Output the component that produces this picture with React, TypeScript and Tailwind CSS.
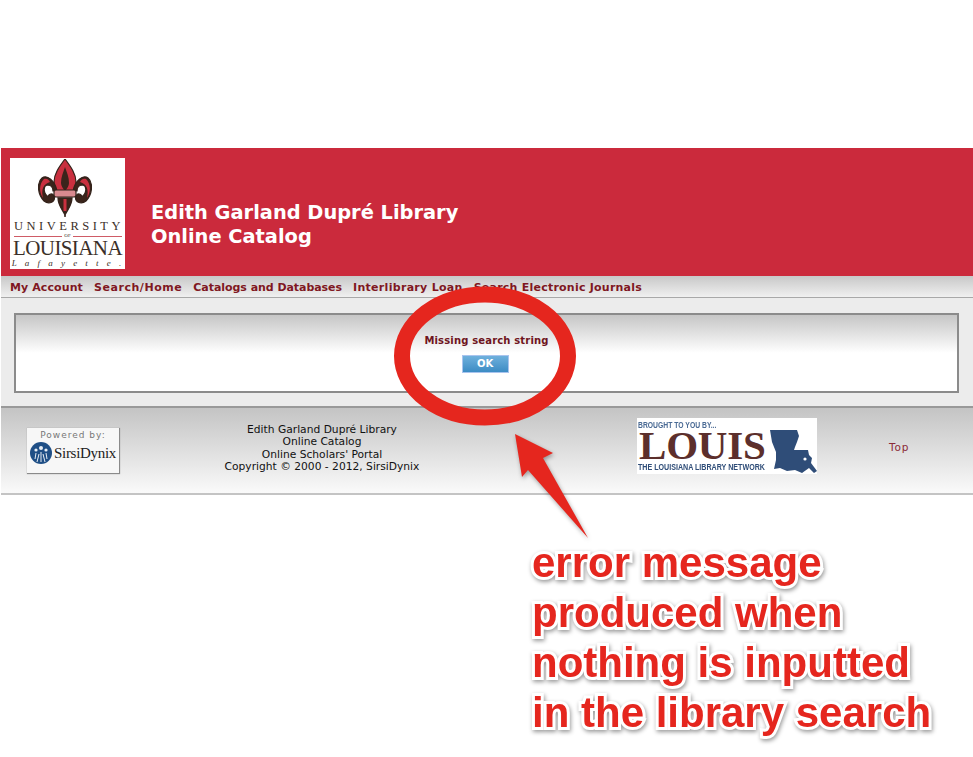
const navLinks = [
  { label: "My Account", cls: "tracking-[0.1px]" },
  { label: "Search/Home", cls: "tracking-[0.55px]" },
  { label: "Catalogs and Databases", cls: "tracking-[-0.05px]" },
  { label: "Interlibrary Loan", cls: "tracking-[0.3px]" },
  { label: "Search Electronic Journals", cls: "tracking-[0.23px]" },
];

function FleurDeLis() {
  return (
    <svg viewBox="0 0 54 58" className="w-[54px] h-[58px]">
      <g stroke="#33221a" strokeWidth="1.2" fill="#c9303f">
        <path d="M27 0C33 8 38 15 38 23C38 29 34 31 34 38L20 38C20 31 16 29 16 23C16 15 21 8 27 0Z" />
        <path d="M27 8C25 14 23 18 23 24C23 27 25 29 26 31L28 31C29 29 31 27 31 24C31 18 29 14 27 8Z" fill="#3a241b" stroke="none" />
        <path d="M20 39L34 39C34 46 30 50 27 56C24 50 20 46 20 39Z" fill="#3a241b" />
        <path d="M27 40L27 52" stroke="#c9303f" strokeWidth="3" />
        <path d="M19 32C17 22 9 15 4 19C-1 23 -1 35 6 42C11 46 18 43 16 37C14 33 9 36 11 38C5 35 5 27 9 26C13 26 15 29 15 32Z" fill="#3a241b" />
        <path d="M35 32C37 22 45 15 50 19C55 23 55 35 48 42C43 46 36 43 38 37C40 33 45 36 43 38C49 35 49 27 45 26C41 26 39 29 39 32Z" fill="#3a241b" />
        <path d="M6 20C1 25 1 33 5 39C3 31 5 25 12 23C11 21 9 19 6 20Z" stroke="none" />
        <path d="M48 20C53 25 53 33 49 39C51 31 49 25 42 23C43 21 45 19 48 20Z" stroke="none" />
        <rect x="16" y="31" width="22" height="7" rx="2" fill="#d98a8f" />
      </g>
      <circle cx="27" cy="57" r="1" fill="#33221a" />
    </svg>
  );
}

function UniversityLogo() {
  return (
    <div className="w-[115px] h-[111px] bg-white flex flex-col items-center font-['Liberation_Serif',serif] text-[#3b2f28] shrink-0">
      <div className="h-[60px] pt-px flex justify-center -translate-x-[3px]">
        <FleurDeLis />
      </div>
      <div className="text-[12.5px] leading-[14px] tracking-[3.5px] ml-[3px] mt-px whitespace-nowrap">UNIVERSITY</div>
      <div className="w-[108px] flex items-center gap-[2px] h-[6px]">
        <div className="flex-1 h-px bg-[#cf5b66]" />
        <div className="text-[5px] leading-[6px]">OF</div>
        <div className="flex-1 h-px bg-[#cf5b66]" />
      </div>
      <div className="text-[21px] leading-[19px] tracking-[-0.6px] whitespace-nowrap">LOUISIANA</div>
      <div className="text-[9px] leading-[11px] italic tracking-[8.2px] ml-[6px] whitespace-nowrap">Lafayette.</div>
    </div>
  );
}

function SirsiLogo() {
  return (
    <div className="w-[93px] h-[46px] bg-[#f7f7f7] border-b border-r border-[#8a8a8a] flex flex-col items-center shrink-0 shadow-[0_0_1px_#999]">
      <div className="text-[9px] leading-[10px] tracking-[1px] mt-[2px] text-[#777] font-['DejaVu_Sans',sans-serif]">Powered by:</div>
      <div className="flex items-center gap-[2px] mt-[2px]">
        <svg viewBox="0 0 22 22" className="w-[22px] h-[22px]">
          <circle cx="11" cy="11" r="11" fill="#1f4f86" />
          <circle cx="11" cy="6" r="2" fill="#e8eef5" />
          <circle cx="6" cy="8" r="1.6" fill="#e8eef5" />
          <circle cx="16" cy="8" r="1.6" fill="#e8eef5" />
          <path d="M11 10V20M9 12L7 20M13 12L15 20M6 11L5 17M16 11L17 17" stroke="#e8eef5" strokeWidth="1" />
        </svg>
        <span className="font-['Liberation_Serif',serif] text-[15px] leading-[22px] tracking-[-0.3px] text-[#222]">SirsiDynix</span>
      </div>
    </div>
  );
}

function LouisLogo() {
  return (
    <div className="w-[180px] h-[56px] bg-white flex shrink-0">
      <div className="w-[133px] flex flex-col pl-px">
        <div className="text-[8.5px] leading-[10px] mt-[2px] font-bold text-[#4a6a94] font-['Liberation_Sans',sans-serif] scale-x-[0.8] origin-left whitespace-nowrap">BROUGHT TO YOU BY...</div>
        <div className="text-[41px] leading-[31px] font-bold tracking-[-0.2px] text-[#5c2f2c] font-['Liberation_Serif',serif] whitespace-nowrap h-[32px] pl-px">LOUIS</div>
        <div className="text-[9px] leading-[10px] font-bold text-[#2f4d78] font-['Liberation_Sans',sans-serif] scale-x-[0.79] origin-left whitespace-nowrap">THE LOUISIANA LIBRARY NETWORK</div>
      </div>
      <svg viewBox="0 0 47 43" className="w-[47px] h-[43px] mt-[12px]">
        <path d="M0 0L27 0L29 6L27 12L25 17L24 20L38 20L39 25L42 28L41 33L47 41L44 43L39 38L32 43L25 40L17 41L10 38L4 39L6 30L6 22L2 12Z" fill="#2f4d78" />
        <circle cx="35" cy="29" r="1.6" fill="#fff" />
      </svg>
    </div>
  );
}

export default function App() {
  return (
    <div className="relative w-[973px] h-[757px] bg-white overflow-hidden pt-[148px] pl-px font-['DejaVu_Sans',sans-serif]">
      {/* header */}
      <div className="h-[128px] bg-[#cb2a3c] flex items-start pl-[9px] pt-[10px]">
        <UniversityLogo />
        <div className="ml-[26px] mt-[43px] text-white font-bold text-[19.4px] leading-[23.5px]">
          <div>Edith Garland Dupré Library</div>
          <div>Online Catalog</div>
        </div>
      </div>

      {/* nav */}
      <div className="h-[22px] pt-[4px] bg-gradient-to-b from-[#c8c8c8] to-[#f0f0f0] border-b border-[#a8a8a8] flex items-center gap-[11px] pl-[9px] text-[11px] font-bold text-[#7f1722] whitespace-nowrap">
        {navLinks.map((l) => (
          <span key={l.label} className={l.cls}>{l.label}</span>
        ))}
      </div>

      {/* message band */}
      <div className="bg-[#ececec] pt-[15px] pb-[13px] pl-[13px] pr-[14px]">
        <div className="h-[80px] border-2 border-[#8b8b8b] bg-gradient-to-b from-[#c6c6c6] via-white to-white flex flex-col items-center pt-[19px]">
          <div className="text-[10px] leading-[14px] font-bold tracking-[0.16px] text-[#6e1420]">Missing search string</div>
          <button className="mt-[7px] mr-[3px] w-[47px] h-[18px] bg-gradient-to-b from-[#6eb0dc] to-[#3c8cc4] border border-[#a9c4ee] text-white font-bold text-[10px] leading-none">OK</button>
        </div>
      </div>

      {/* footer */}
      <div className="h-[89px] bg-gradient-to-b from-[#c4c4c4] to-[#fafafa] border-t-2 border-b-2 border-t-[#999] border-b-[#c4c4c4] flex items-start text-[#111]">
        <div className="ml-[26px] mt-[20px]">
          <SirsiLogo />
        </div>
        <div className="ml-[52px] mt-[16px] w-[300px] text-center text-[10.7px] leading-[12.3px]">
          <div>Edith Garland Dupré Library</div>
          <div>Online Catalog</div>
          <div>Online Scholars' Portal</div>
          <div>Copyright © 2000 - 2012, SirsiDynix</div>
        </div>
        <div className="ml-[165px] mt-[10px]">
          <LouisLogo />
        </div>
        <div className="ml-[72px] mt-[33px] text-[10.5px] leading-[12px] tracking-[0.8px] text-[#8b2a36]">Top</div>
      </div>

      {/* annotations */}
      <svg className="absolute left-0 top-0 w-[973px] h-[757px] pointer-events-none" viewBox="0 0 973 757">
        <ellipse cx="485" cy="356" rx="83" ry="61.5" fill="none" stroke="#e5261e" strokeWidth="16" />
        <path
          d="M515 434L553 453L543 458L588 538L528 470L522 477Z"
          fill="#e5261e"
          className="drop-shadow-[1px_2px_2px_rgba(0,0,0,0.35)]"
        />
      </svg>
      <div className="absolute left-[532px] top-[538px] text-[42px] leading-[50px] font-bold text-[#e5261e] font-['Liberation_Sans',sans-serif] whitespace-nowrap [-webkit-text-stroke:6px_white] [paint-order:stroke_fill] drop-shadow-[1px_2px_2px_rgba(0,0,0,0.4)]">
        <div>error message</div>
        <div>produced when</div>
        <div>nothing is inputted</div>
        <div>in the library search</div>
      </div>
    </div>
  );
}
